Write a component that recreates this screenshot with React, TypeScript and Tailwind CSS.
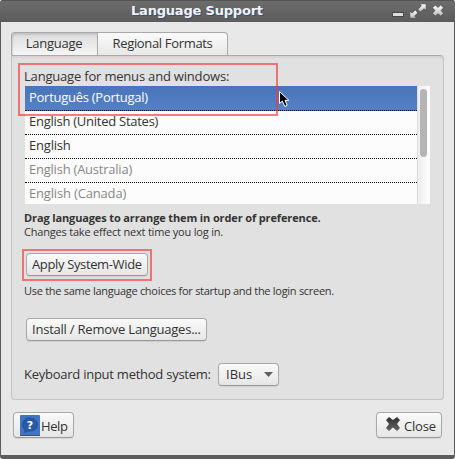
import type { ReactNode } from "react";

const buttonBase =
  "flex items-center whitespace-nowrap rounded-[4px] border border-[#a9a9a9] border-b-[#999] bg-linear-to-b from-[#fafafa] to-[#e6e6e6] shadow-[0_1px_1px_rgba(0,0,0,0.08)]";

function Button({ className, children }: { className: string; children: ReactNode }) {
  return <button type="button" className={`${buttonBase} ${className}`}>{children}</button>;
}

const languages = [
  { name: "Português (Portugal)", style: "h-[25px] pt-[2px] bg-linear-to-b from-[#4a74b8] to-[#5480c6] text-white border-b border-dotted border-black tracking-[-0.27px]" },
  { name: "English (United States)", style: "h-6 pt-px text-[#333] border-b border-dotted border-black tracking-[-0.26px]" },
  { name: "English", style: "h-6 pt-px text-[#333] border-b border-dotted border-black tracking-[-0.2px]" },
  { name: "English (Australia)", style: "h-6 pt-px text-[#888] border-b border-dotted border-black tracking-[-0.23px]" },
  { name: "English (Canada)", style: "h-[21px] pt-px text-[#888] tracking-[-0.17px]" },
];

function TitleBar() {
  return (
    <header className="relative flex h-[22px] items-center justify-end border-t border-[#555] bg-linear-to-b from-[#6c6c6c] to-[#5c5c5c]">
      <h1 className="absolute left-[131px] top-0 whitespace-nowrap font-['DejaVu_Sans'] text-[13px] font-bold leading-[20px] tracking-[-0.2px] text-[#f2f2f2] [text-shadow:1px_1px_0_#35507c]">
        Language Support
      </h1>
      <svg width="66" height="21" viewBox="389 1 66 21" className="block">
        <defs>
          <linearGradient id="metal" x1="0" y1="0" x2="0" y2="1">
            <stop offset="0" stopColor="#fff" />
            <stop offset="1" stopColor="#bbb" />
          </linearGradient>
        </defs>
        <rect x="392.5" y="12.5" width="11" height="4" fill="#ddd" stroke="#484848" />
        <path d="M419.5 3.8H426.2V10.5L424 8.8L420.5 12L417.8 9.3L421.3 5.8Z" fill="url(#metal)" stroke="#454545" strokeWidth=".7" />
        <path d="M409.8 11.2L412 13L415.2 10L417.9 12.7L414.7 16L416.5 18.2H409.8Z" fill="url(#metal)" stroke="#454545" strokeWidth=".7" />
        <path d="M432.5 7.8L435.3 5L438 7.4L440.7 5L443.5 7.8L441.1 10.5L443.5 13.3L440.7 16.1L438 13.7L435.3 16.1L432.5 13.3L434.9 10.5Z" fill="url(#metal)" stroke="#454545" strokeWidth=".7" strokeLinejoin="round" />
      </svg>
    </header>
  );
}

export default function App() {
  return (
    <div className="relative h-[459px] w-[455px] overflow-hidden bg-white font-['Open_Sans','Noto_Sans',sans-serif] text-[13px] leading-[18px] text-[#333]">
      <div className="flex h-[459px] w-[455px] flex-col overflow-hidden rounded-[3px] bg-[#5c5c5c]">
        <TitleBar />
        <main className="mx-px h-[433px] bg-[#e8e8e8] px-[10px] pt-[10px]">
          <nav className="flex h-[23px]">
            <div className="flex w-[87px] justify-center rounded-tl-[4px] border border-b-0 border-[#a9a9a9] bg-linear-to-b from-[#dcdcdc] to-[#f6f6f6] pr-px pt-px tracking-[-0.25px] shadow-[inset_1px_2px_2px_rgba(0,0,0,0.12)]">Language</div>
            <div className="flex w-[130px] justify-center rounded-tr-[4px] border border-b-0 border-l-0 border-[#a9a9a9] bg-linear-to-b from-[#fafafa] to-[#e8e8e8] pt-px tracking-[-0.33px]">Regional Formats</div>
          </nav>
          <section className="flex h-[345px] w-[433px] flex-col items-start whitespace-nowrap rounded-b-[4px] rounded-tr-[4px] border border-[#c4c4c4] border-t-[#a9a9a9] bg-[#e1e1e1] pl-[13px] pt-[11px] shadow-[inset_0_2px_2px_rgba(0,0,0,0.06)]">
            <p className="-ml-px h-[19px] tracking-[-0.19px]">Language for menus and windows:</p>
            <div className="flex h-[118px] w-[405px] bg-[#fcfcfc]">
              <ul className="w-[392px]">
                {languages.map((language) => (
                  <li key={language.name} className={`pl-1 ${language.style}`}>{language.name}</li>
                ))}
              </ul>
              <div className="w-[13px] border-l border-[#ddd] bg-linear-to-r from-[#eee] to-white pl-[2px] pt-[3px]">
                <div className="h-[68px] w-[7px] rounded-full bg-[#b5b5b5]" />
              </div>
            </div>
            <p className="-ml-px mt-[7px] h-[14px] text-[11px] font-bold leading-[14px] tracking-[-0.13px]">Drag languages to arrange them in order of preference.</p>
            <p className="-ml-px h-[14px] text-[11px] leading-[14px] tracking-[-0.2px]">Changes take effect next time you log in.</p>
            <Button className="ml-px mt-[14px] h-[23px] w-[122px] pb-[2px] pl-[5px] tracking-[-0.36px]">Apply System-Wide</Button>
            <p className="-ml-px mt-2 h-[14px] text-[11px] leading-[14px] tracking-[-0.28px]">Use the same language choices for startup and the login screen.</p>
            <Button className="ml-px mt-5 h-[23px] w-[181px] pb-[2px] pl-[5px] tracking-[-0.22px]">Install / Remove Languages...</Button>
            <div className="-ml-px mt-[22px] flex items-center">
              <span className="w-[194px] pb-[2px] tracking-[-0.25px]">Keyboard input method system:</span>
              <Button className="h-[23px] w-[61px] justify-between pl-[7px] pr-[5px]">
                <span className="pb-[2px]">IBus</span>
                <svg width="9" height="5"><path d="M0 0H9L4.5 5Z" fill="#606060" /></svg>
              </Button>
            </div>
          </section>
          <footer className="ml-[2px] mt-3 flex w-[429px] justify-between">
            <Button className="h-[26px] w-[61px] pl-[6px] pt-px">
              <svg width="20" height="21" viewBox="0 0 20 21" className="-mt-px">
                <rect width="20" height="21" rx="1" fill="#3f75c3" />
                <path d="M0 20H20V21H0Z" fill="#40516c" />
                <path d="M10 3C5.5 3 2.5 6 2.5 9.5C2.5 12 3.5 14 5.5 15L4 17.5L9 16C14 16.5 17.5 13.5 17.5 9.5C17.5 6 14.5 3 10 3Z" fill="#285aa8" stroke="#234c91" strokeWidth=".8" />
                <text x="6.8" y="13.5" fill="white" fontFamily="DejaVu Sans" fontSize="11" fontWeight="bold">?</text>
              </svg>
              <span className="ml-px tracking-[-0.4px]">Help</span>
            </Button>
            <Button className="h-[26px] w-[66px] gap-1 pl-[9px] pt-px">
              <svg width="14" height="14" viewBox="0 0 14 14" className="-mt-[3px]">
                <defs><linearGradient id="closeFill" x1="0" y1="0" x2="0" y2="1"><stop stopColor="#2f2f2f" /><stop offset="1" stopColor="#666" /></linearGradient></defs>
                <path d="M0 3L3 0L7 3L11 0L14 3L11 7L14 11L11 14L7 10.5L3 14L0 11L3 7Z" fill="url(#closeFill)" />
              </svg>
              <span className="tracking-[-0.2px]">Close</span>
            </Button>
          </footer>
        </main>
      </div>
      <div className="absolute left-[18px] top-[63px] h-[53px] w-[260px] border-2 border-[#ef3a3a]/65" />
      <div className="absolute left-[22px] top-[249px] h-8 w-[130px] border-2 border-[#ef3a3a]/65" />
      <svg className="absolute left-[279px] top-[91px]" width="12" height="17" viewBox="0 0 12 17">
        <path d="M.5 .5V12.5L3.3 10L5.8 15.5L8.2 14.3L6 9.3H9.8Z" fill="#000" stroke="#fff" strokeWidth="1" />
      </svg>
    </div>
  );
}
